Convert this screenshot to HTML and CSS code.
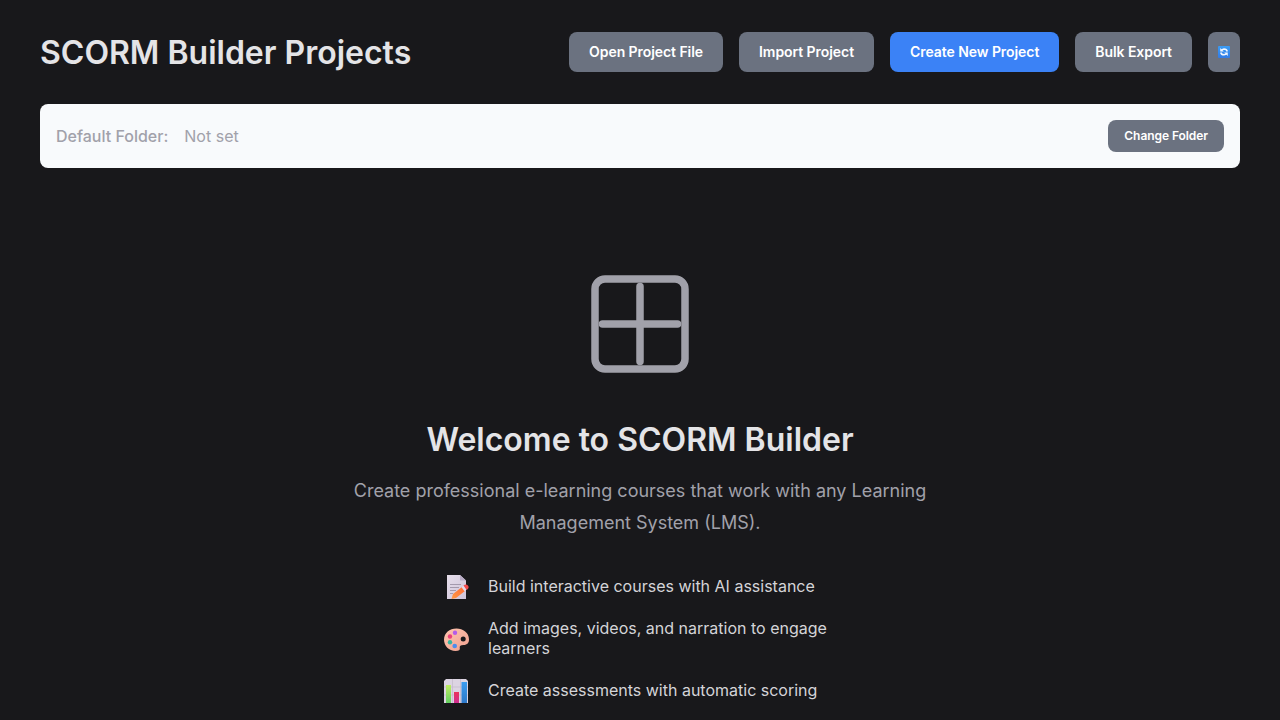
FILE: index.html
```html
<!DOCTYPE html>
<html lang="en">
<head>
<meta charset="utf-8">
<title>SCORM Builder Projects</title>
<link rel="stylesheet" href="styles.css">
</head>
<body>
<div class="page">
  <header class="header">
    <h1 class="title">SCORM Builder Projects</h1>
    <div class="actions">
      <button class="btn">Open Project File</button>
      <button class="btn">Import Project</button>
      <button class="btn btn-primary">Create New Project</button>
      <button class="btn">Bulk Export</button>
      <button class="btn btn-icon" aria-label="Refresh">
        <svg width="12" height="12" viewBox="0 0 24 24"><defs><linearGradient id="rf" x2="0" y2="1"><stop stop-color="#3b9cf4"/><stop offset="1" stop-color="#327be5"/></linearGradient></defs><rect width="24" height="24" rx="2" fill="url(#rf)"/><g fill="none" stroke="#f2f7ff" stroke-width="3"><path d="M18.500 11Q17.500 6 12 6L7 8"/><path d="M5.500 13Q6.500 17.500 12 17.500L17 16"/></g><path d="M4.500 4v7h7zM19.500 20v-7h-7z" fill="#f2f7ff"/></svg>
      </button>
    </div>
  </header>
  <section class="folder">
    <span class="folder-label">Default Folder:</span>
    <span class="folder-value">Not set</span>
    <button class="btn btn-small">Change Folder</button>
  </section>
  <main class="welcome">
    <svg class="hero" width="120" height="120" viewBox="0 0 24 24" fill="none" stroke="#a1a1aa" stroke-width="1.5" stroke-linecap="round"><rect x="3" y="3" width="18" height="18" rx="2"/><path d="M12 4.500v15M4.500 12h15"/></svg>
    <h2 class="welcome-title">Welcome to SCORM Builder</h2>
    <p class="description">Create professional e-learning courses that work with any Learning Management System (LMS).</p>
    <ul class="features">
      <li class="feature">
        <svg class="emoji" viewBox="0 0 28 28"><defs><linearGradient id="pg" x2="1" y2="1"><stop stop-color="#e6deeb"/><stop offset="1" stop-color="#cfc3d9"/></linearGradient><linearGradient id="pn" x1="1" x2="0" y2="1"><stop stop-color="#ff6b35"/><stop offset="1" stop-color="#ff9a48"/></linearGradient></defs><path d="M5 2h13l6 5.500v18.500H5z" fill="url(#pg)"/><path d="M18 2v5.500h6z" fill="#b9adc7"/><path d="M8 11.500h11M8 14.500h9M8 17.500h6M8 20.500h3" stroke="#a49aad"/><path d="M9.500 26l1.500-5 9-7 3 4-9 7z" fill="url(#pn)"/><path d="M19.500 14.300l2.200-1.700 3 3.900-2.200 1.700z" fill="#e6dae8"/><path d="M21.500 12.500q2.700-1.900 4.400.1t-.6 3.800l-.8.4z" fill="#f34b4d"/></svg>
        <span>Build interactive courses with AI assistance</span>
      </li>
      <li class="feature">
        <svg class="emoji" viewBox="0 0 28 28"><defs><linearGradient id="pl" x2="1" y2="1"><stop stop-color="#ffc4ae"/><stop offset="1" stop-color="#efa090"/></linearGradient></defs><path d="M14.500 3.500C7.500 3.500 2 8 2 14.500s5 11.500 11.500 11.500c3.500 0 4.800-1 4.300-3-.5-2 .7-3 3.700-3 4 0 5.500-2.500 5.500-5.500C27 7.500 21 3.500 14.500 3.500z" fill="url(#pl)"/><circle cx="21.200" cy="14" r="2.500" fill="#18181b"/><circle cx="13" cy="7.800" r="2.200" fill="#b45be8"/><circle cx="8" cy="11.500" r="2.200" fill="#ed4078"/><circle cx="8" cy="17.200" r="2.200" fill="#35b6a0"/><circle cx="12.700" cy="21" r="2.300" fill="#4d8ded"/></svg>
        <span>Add images, videos, and narration to engage learners</span>
      </li>
      <li class="feature">
        <svg class="emoji" viewBox="0 0 28 28"><defs><linearGradient id="gr" x2="0" y2="1"><stop stop-color="#c0ed63"/><stop offset="1" stop-color="#62ce60"/></linearGradient><linearGradient id="rd" x2="0" y2="1"><stop stop-color="#eb345c"/><stop offset="1" stop-color="#cf2e91"/></linearGradient><linearGradient id="bl" x2="0" y2="1"><stop stop-color="#3a9cf0"/><stop offset="1" stop-color="#2e79c9"/></linearGradient></defs><path d="M4 2h20l2 2v22H2V4z" fill="#dcd4e2"/><path d="M10.500 2v24M18.500 2v24M2 10h24M2 18h24" stroke="#c3b9cc" stroke-width=".7"/><path d="M4 8h5v18H4z" fill="url(#gr)"/><path d="M12 15h5v11h-5z" fill="url(#rd)"/><path d="M19.500 5H25v21h-5.500z" fill="url(#bl)"/></svg>
        <span>Create assessments with automatic scoring</span>
      </li>
    </ul>
  </main>
</div>
</body>
</html>
```
FILE: styles.css
```css
* { box-sizing: border-box; }
body {
  margin: 0;
  height: 720px;
  overflow: hidden;
  background: #18181b;
  color: #e4e4e7;
  font-family: Inter, sans-serif;
  font-size: 16px;
}
.page { padding: 32px 40px; }
.header { display: flex; justify-content: space-between; align-items: center; height: 40px; }
.title { margin: 0; padding-top: 2px; font-size: 32px; font-weight: 600; line-height: 40px; }
.actions { display: flex; gap: 16px; }
.btn {
  height: 40px;
  padding: 0 20px;
  border: 0;
  border-radius: 8px;
  background: #6b7280;
  color: #fff;
  font: 600 14px/20px Inter, sans-serif;
  letter-spacing: -0.065px;
  white-space: nowrap;
}
.btn-primary { background: #3b82f6; }
.btn-icon { display: flex; align-items: center; justify-content: center; width: 32px; padding: 0; }
.btn-small { height: 32px; padding: 0 16px; margin-left: auto; font-size: 12px; }
.folder {
  display: flex;
  align-items: center;
  gap: 16px;
  height: 64px;
  margin-top: 32px;
  padding: 16px;
  border-radius: 8px;
  background: #f8fafc;
  color: #a1a1aa;
}
.folder-label { font-weight: 500; }
.welcome { display: flex; flex-direction: column; align-items: center; padding-top: 96px; }
.hero { display: block; }
.welcome-title { margin: 32px 0 0; font-size: 32px; font-weight: 600; line-height: 48px; }
.description {
  width: 600px;
  margin: 11px 0 0;
  color: #a1a1aa;
  font-size: 18px;
  line-height: 32px;
  text-align: center;
}
.features { display: flex; flex-direction: column; gap: 16px; width: 400px; margin: 31px 0 0; padding: 0; list-style: none; color: #d4d4d8; }
.feature { display: flex; align-items: center; gap: 16px; min-height: 32px; line-height: 20px; }
.emoji { flex: none; width: 32px; height: 28px; margin-top: 2px; }
```
